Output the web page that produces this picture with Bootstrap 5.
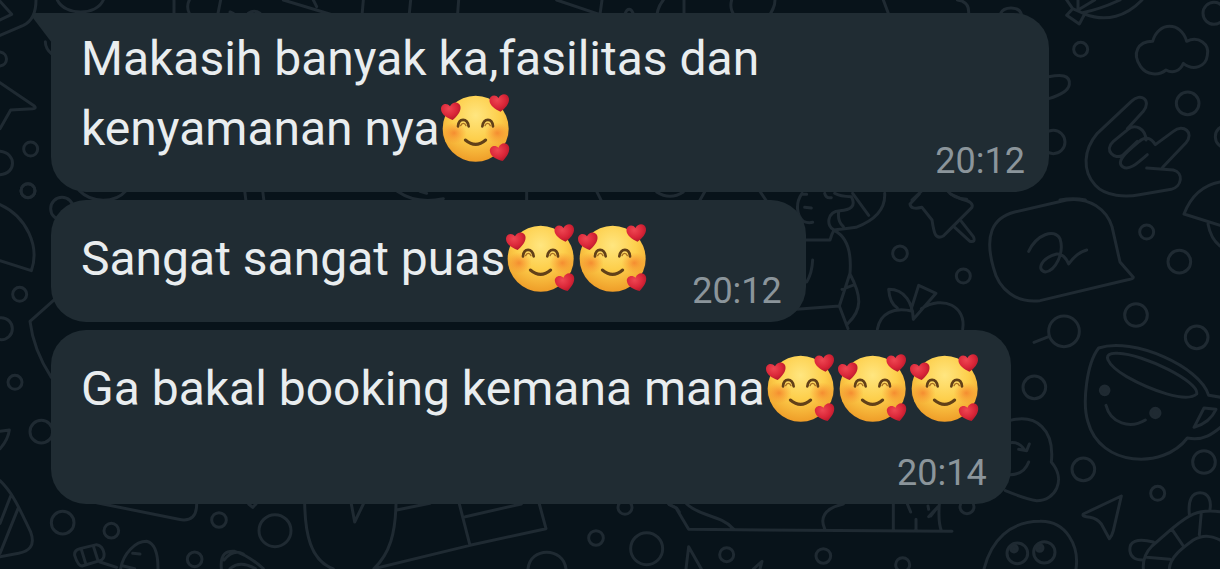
<!DOCTYPE html>
<html lang="id">
<head>
<meta charset="utf-8">
<meta name="viewport" content="width=device-width, initial-scale=1">
<title>Chat</title>
<link href="https://cdn.jsdelivr.net/npm/bootstrap@5.3.0/dist/css/bootstrap.min.css" rel="stylesheet">
<style>
body{background:#08131a;color:#e9edef;font-family:Roboto,"Noto Sans",sans-serif}
.chat{padding:13px 51px 0;gap:8px;overflow:hidden}
.doodles{z-index:0;fill:none;stroke:#1f2a32;stroke-width:9;stroke-linecap:round;stroke-linejoin:round}
.doodles .solid{fill:#1f2a32}
.bubble{z-index:1;background:#202c33;border-radius:35px;padding:24px 24px 0 30px;max-width:100%}
.bubble-first{width:998px;border-top-left-radius:0;padding-top:11px}
.tail{right:100%;top:0;width:20px;height:30px;fill:#202c33;margin-right:-1px}
.message{font-size:48px;line-height:70px;margin:0 0 28px}
.bubble-stacked .message{margin:0 6px 0 0}
.emoji{width:72px;height:70px;vertical-align:-18px;margin-top:-4px;overflow:visible}
.stamp{font-size:36px;line-height:42px;color:#8b959b;margin-bottom:10px}
.stamp-near{margin-left:43px}
.bubble-stacked .stamp{margin-top:28px}
</style>
</head>
<body>
<svg class="position-absolute" width="0" height="0" aria-hidden="true">
<defs>
<radialGradient id="skin" cx=".5" cy=".3" r=".72"><stop offset="0" stop-color="#ffe680"/><stop offset=".5" stop-color="#fdcf4c"/><stop offset="1" stop-color="#ee9a26"/></radialGradient>
<radialGradient id="blush"><stop offset="0" stop-color="#f37a2a" stop-opacity=".75"/><stop offset="1" stop-color="#f88b2c" stop-opacity="0"/></radialGradient>
<radialGradient id="red" cx=".4" cy=".35" r=".7"><stop offset="0" stop-color="#ee4652"/><stop offset=".6" stop-color="#da2638"/><stop offset="1" stop-color="#b0172a"/></radialGradient>
<path id="heart" d="M6 28C-9 22-29 12-29-6C-29-19-12-26-2-13C4-28 25-29 29-14C33 2 18 18 6 28Z" fill="url(#red)"/>
<symbol id="love" viewBox="30 40 216 210">
<circle cx="137" cy="147" r="99" fill="url(#skin)"/>
<ellipse cx="72" cy="160" rx="38" ry="32" fill="url(#blush)"/><ellipse cx="202" cy="160" rx="38" ry="32" fill="url(#blush)"/>
<g fill="none" stroke="#624018" stroke-linecap="round">
<path d="M84 140C86 114 112 114 116 140M157 140C161 114 187 114 189 140" stroke-width="8"/>
<path d="M92 138C95 129 105 129 108 138M165 138C168 129 178 129 181 138" stroke="#a86e22" stroke-width="4"/>
<path d="M106 181Q137 207 167 181" stroke-width="9"/></g>
<use href="#heart" x="62" y="93"/><use href="#heart" transform="translate(207 68) rotate(3)"/><use href="#heart" transform="translate(209 217) rotate(-6)"/>
</symbol>
</defs>
</svg>

<main class="chat position-relative d-flex flex-column align-items-start min-vh-100">
<svg class="doodles position-absolute top-0 start-0 w-100 h-100" viewBox="0 0 1220 569" preserveAspectRatio="xMinYMin slice" aria-hidden="true">
<!-- top left -->
<g transform="scale(.33333)">
<path d="M0 4L35 43L0 60M108 0C108 38 96 64 70 76L0 106M172 0C195 48 290 48 310 0M0 156C26 160 26 195 0 198M0 248L103 318Q110 325 98 326L32 330L0 386M136 125Q136 145 155 162M0 454C50 458 50 522 0 524"/>
<circle cx="92" cy="447" r="21"/><circle cx="84" cy="572" r="21"/>
<path d="M522 0V40M568 0Q558 20 568 40M662 0L654 40M690 36L700 40M745 40Q763 28 780 40M850 0L1108 78M940 0L950 20M1090 0L1084 70M1232 0L1224 80M1376 0L1370 80M1435 80C1445 45 1490 45 1500 80M1670 0L1800 44L1806 0M1870 80C1870 10 1905 10 1905 80M1990 0Q1965 30 1970 80M2052 0V80M2195 0C2185 35 2210 60 2240 75M2325 0C2325 35 2300 50 2290 75M2650 0L2680 80M2475 80Q2490 45 2505 80"/>
</g>
<!-- between the first two bubbles -->
<g transform="translate(40 170) scale(.33333)">
<path d="M118 62C155 100 225 100 258 62M614 62L618 94M668 62L672 94M1072 64Q1130 104 1210 86M1140 64L1160 70M1460 64V94M1670 64L1685 94M1850 66Q1890 92 1930 66M1995 64L1978 94M2160 64L2180 94"/>
</g>
<!-- cloud, horns hand -->
<g transform="translate(900 0) scale(.33333)">
<path d="M172 0Q208 4 206 40M302 40C312 18 356 18 364 42M500 0L518 26L500 46L538 72L554 42L518 26M534 0V30L584 0M548 38Q600 28 660 0M554 42C620 68 680 48 726 0"/>
<circle cx="542" cy="148" r="21"/><circle cx="942" cy="40" r="33"/><circle cx="863" cy="310" r="34"/><circle cx="460" cy="426" r="35"/><circle cx="980" cy="410" r="34"/>
<path d="M758 124C774 64 844 64 860 124C896 106 930 134 922 166C918 200 880 214 850 190C840 216 816 220 798 210C776 228 740 226 722 200C694 160 714 124 758 124ZM446 230C480 224 512 222 508 254C504 274 474 288 446 296"/>
<path d="M788 502L858 428C884 398 850 370 820 394L766 434C752 410 732 410 718 424C680 456 646 484 668 500C688 514 716 486 742 464M738 420C736 386 706 370 684 388L640 424C610 452 644 480 668 466L712 424M682 386L730 334C756 300 722 276 694 304L592 400C550 450 546 512 586 556C616 590 680 592 718 584L814 568C846 560 852 518 820 510L740 504"/>
<path d="M36 600L66 572M142 572Q160 596 200 598M480 600Q520 592 556 600"/>
</g>
<!-- cat, pin, apple -->
<g transform="translate(780 180) scale(.33333)">
<path d="M66 40C45 70 50 106 70 124Q84 130 98 127M74 82L94 84M66 43H80M134 40Q138 56 154 53M164 40Q180 50 214 50C230 80 210 90 180 92C140 94 138 140 162 150Q156 160 150 180H78M218 40L266 106M314 40Q318 108 228 142Q180 148 162 150M176 96Q172 124 190 140M164 152C210 176 214 230 210 280L178 378L50 388M178 378L204 446M210 282C246 350 246 390 204 430M186 328L224 314M98 240Q96 280 80 306"/>
<path d="M418 42L390 72Q392 90 426 82L456 120C462 160 466 180 490 168L516 142L576 82Q582 66 546 58L512 42M524 142L570 184Q588 188 580 170L544 124"/>
<circle cx="360" cy="220" r="22"/><circle cx="550" cy="288" r="21"/>
<path d="M292 448C300 400 340 380 398 394M400 418C398 370 376 328 326 328C328 360 340 376 352 384M394 386L416 316L468 340L400 418M424 386C490 344 560 380 548 448"/>
</g>
<!-- sticker -->
<g transform="translate(960 180) scale(.33333)">
<path d="M164 96L320 60C390 50 440 90 456 140L480 246L520 292Q520 298 500 300L240 362C170 370 116 330 100 262C74 170 94 114 164 96ZM206 214C230 164 282 144 300 176C314 220 286 272 256 276C228 270 244 234 290 222Q312 220 326 252Q350 218 380 210"/>
<circle cx="560" cy="156" r="21"/><circle cx="658" cy="245" r="34"/><circle cx="528" cy="405" r="34"/><circle cx="710" cy="472" r="34"/><circle cx="312" cy="454" r="46"/>
<path d="M222 487L266 470M780 6Q704 20 672 102L780 136M744 132Q752 176 780 198"/>
</g>
<!-- cup, plane, owl, turtle -->
<g transform="translate(980 330) scale(.33333)">
<circle cx="163" cy="172" r="34"/><circle cx="310" cy="418" r="34"/><circle cx="672" cy="396" r="34"/><circle cx="533" cy="490" r="21"/>
<path d="M356 54C460 20 660 110 686 196L724 202M356 54C320 100 306 220 324 276C360 410 550 420 622 324C670 334 700 310 724 290M650 192C620 220 510 180 440 140C380 104 360 66 414 70C490 72 660 156 650 192ZM378 226C392 280 450 298 496 270M672 234L708 238Q690 278 642 292Z"/>
<circle class="solid" cx="374" cy="181" r="13"/><circle class="solid" cx="526" cy="249" r="14"/>
<path d="M88 272C170 250 224 300 214 396C260 450 226 512 170 512Q140 508 76 482M90 338Q118 334 134 360M116 358L140 362L148 342M146 396Q132 434 90 434"/>
<path d="M424 498L310 552Q304 560 330 562Q352 566 364 582L388 626Q396 618 400 602Z"/>
<path d="M12 717C34 630 90 574 180 574C260 572 298 650 288 717"/>
<circle cx="112" cy="670" r="31"/><circle cx="193" cy="667" r="32"/><circle class="solid" cx="102" cy="656" r="10"/><circle class="solid" cx="179" cy="654" r="10"/>
<path d="M724 546C650 534 620 560 576 596L516 648C494 670 488 690 490 717M568 717C570 680 610 652 640 630Q680 606 724 632M664 546L658 614M576 598L610 648M500 682L570 688M628 552C624 510 636 488 660 488C688 488 694 516 690 538M520 636C470 624 446 634 450 664Q454 690 488 690"/>
</g>
<!-- left edge -->
<g transform="translate(0 180) scale(.33333)">
<circle cx="84" cy="32" r="21"/><circle cx="186" cy="86" r="34"/><circle cx="59" cy="343" r="21"/><circle cx="4" cy="446" r="33"/><circle cx="45" cy="607" r="21"/><circle cx="124" cy="755" r="34"/><circle cx="188" cy="1028" r="34"/>
<path d="M0 74C80 110 120 200 94 272L0 242M164 358L90 424C98 490 120 540 154 592M0 754L28 750Q24 780 0 806M0 902C40 940 60 990 92 1056C108 1100 84 1114 56 1120L0 1130M32 948L0 1030M54 986L0 1120"/>
</g>
<!-- bottom edge -->
<g transform="translate(0 490) scale(.33333)">
<circle cx="334" cy="122" r="22"/><circle cx="657" cy="90" r="22"/><circle cx="584" cy="208" r="22"/><circle cx="825" cy="122" r="48"/>
<path d="M290 38L536 88C576 96 590 76 590 42M746 42L758 52L768 42M240 176L290 164Q308 166 312 190Q314 208 300 212L246 228Q234 228 224 196Q222 180 240 176ZM244 178L258 224M280 168L294 212M300 216L350 232M362 236C370 190 406 154 440 154Q474 162 474 236M398 190L420 192M370 228L404 236M664 236C660 190 680 182 704 184Q742 194 790 236M672 210Q700 176 730 192M690 236Q720 210 766 236"/>
</g>
<g transform="translate(300 490) scale(.33333)">
<path d="M14 42C16 130 30 210 100 237M288 42C286 130 270 190 222 236L510 166L738 116L718 42M478 42L510 166M496 80L664 42M290 60L390 40M154 42L164 96L190 42M684 237C690 170 790 170 798 237M1106 42L1130 54L1138 66"/>
<circle cx="888" cy="144" r="22"/><circle cx="975" cy="52" r="21"/><circle cx="1040" cy="176" r="48"/>
</g>
<g transform="translate(660 490) scale(.33333)">
<path d="M28 44L48 54L86 118L876 124M80 42C120 80 180 74 220 116M550 42C490 56 480 86 494 116M700 42V122M742 42L752 66M768 88V120M804 48L806 58M806 80L834 50L812 78M838 42Q834 96 844 122M78 237L86 170L124 237M280 237L306 214L300 237"/>
<circle cx="200" cy="194" r="21"/><circle cx="490" cy="198" r="22"/><circle cx="728" cy="224" r="21"/><circle cx="921" cy="50" r="21"/>
</g>
</svg>

<article class="bubble bubble-first position-relative d-flex align-items-end justify-content-between">
<svg class="tail position-absolute" viewBox="0 0 20 30" aria-hidden="true"><path d="M2 0H20V30L1 5Q-1 1 2 0Z"/></svg>
<p class="message">Makasih banyak ka,fasilitas dan kenyamanan nya<svg class="emoji" role="img" aria-label="🥰"><use href="#love"/></svg></p>
<time class="stamp" datetime="20:12">20:12</time>
</article>

<article class="bubble position-relative d-flex align-items-end">
<p class="message">Sangat sangat puas<svg class="emoji" role="img" aria-label="🥰"><use href="#love"/></svg><svg class="emoji" role="img" aria-label="🥰"><use href="#love"/></svg></p>
<time class="stamp stamp-near" datetime="20:12">20:12</time>
</article>

<article class="bubble bubble-stacked position-relative d-flex flex-column">
<p class="message">Ga bakal booking kemana mana<svg class="emoji" role="img" aria-label="🥰"><use href="#love"/></svg><svg class="emoji" role="img" aria-label="🥰"><use href="#love"/></svg><svg class="emoji" role="img" aria-label="🥰"><use href="#love"/></svg></p>
<time class="stamp align-self-end" datetime="20:14">20:14</time>
</article>
</main>
<script src="https://cdn.jsdelivr.net/npm/bootstrap@5.3.0/dist/js/bootstrap.bundle.min.js"></script>
</body>
</html>
